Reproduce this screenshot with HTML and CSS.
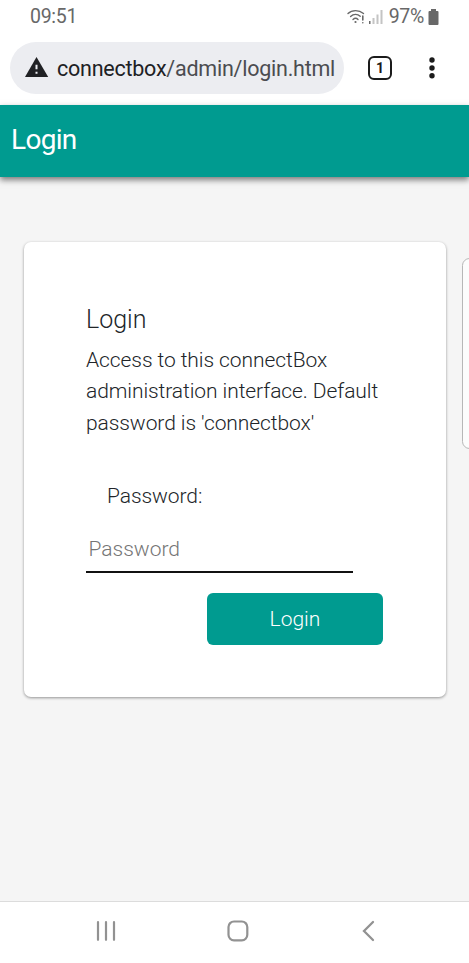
FILE: index.html
```html
<!DOCTYPE html>
<html lang="en">
<head>
<meta charset="utf-8">
<title>Login</title>
<link rel="stylesheet" href="styles.css">
</head>
<body>
<div class="status">
  <span class="time">09:51</span>
  <div class="indicators">
    <svg class="wifi" width="19" height="16" viewBox="0 0 19 16" fill="none" stroke="#686868" stroke-width="1.4" stroke-linecap="round">
      <path d="M1 4.500C5 .6 12 .6 16.500 4.500M3.600 7.500C6.500 4.700 10.500 4.700 13.200 7.200M6 10.400C7.600 8.900 9.500 8.900 11 10.400"/>
      <circle cx="8.500" cy="13" r="1.100" fill="#686868" stroke="none"/>
      <path d="M15.800 7V11M15.800 13.700V13.800" stroke-width="1.600"/>
    </svg>
    <svg class="signal" width="15" height="16" viewBox="0 0 15 16">
      <path fill="#686868" d="M1 12h1.500v3H1z"/>
      <path fill="#c4c4c4" d="M4.500 9h2v6h-2zM8.500 5.500h2V15h-2zM12.500 1h2v14h-2z"/>
    </svg>
    <span class="percent">97%</span>
    <svg class="battery" width="11" height="16" viewBox="0 0 11 16"><path fill="#686868" d="M3 0h5v2h1.500q1 0 1 1V15q0 1-1 1h-8q-1 0-1-1V3q0-1 1-1H3z"/></svg>
  </div>
</div>
<div class="browser">
  <div class="address">
    <svg class="warning" width="24" height="20" viewBox="0 0 24 20"><path fill="#202124" d="M11.500 0L23.200 20H0z"/><path fill="#ecedf1" d="M10.500 7.800h2v4.500h-2zM10.500 14.700h2v2h-2z"/></svg>
    <span class="url">connectbox<span class="path">/admin/login.html</span></span>
  </div>
  <div class="tabs">1</div>
  <svg class="more" width="6" height="22" viewBox="0 0 6 22" fill="#1b1b1b"><circle cx="3" cy="3" r="2.700"/><circle cx="3" cy="11" r="2.700"/><circle cx="3" cy="18.800" r="2.700"/></svg>
</div>
<header class="header"><h1>Login</h1></header>
<main class="content">
  <form class="card">
    <h2>Login</h2>
    <p>Access to this connectBox<br>administration interface. Default<br>password is 'connectbox'</p>
    <label for="password">Password:</label>
    <input id="password" type="password" placeholder="Password">
    <button type="button">Login</button>
  </form>
  <div class="edge-panel"></div>
</main>
<nav class="nav">
  <svg width="20" height="20" viewBox="0 0 20 20" stroke="#929292" stroke-width="2.200" stroke-linecap="round"><path d="M2 1.200v17.600M10 1.200v17.600M18 1.200v17.600"/></svg>
  <svg class="home" width="22" height="22" viewBox="0 0 22 22" fill="none" stroke="#929292" stroke-width="2.200"><rect x="1.500" y="1.500" width="18.800" height="18.800" rx="5.500"/></svg>
  <svg width="14" height="22" viewBox="0 0 14 22" fill="none" stroke="#929292" stroke-width="2.300" stroke-linecap="round"><path d="M12 2L3 11l9 9"/></svg>
</nav>
</body>
</html>
```
FILE: styles.css
```css
* { box-sizing: border-box; }
body {
  margin: 0;
  height: 963px;
  display: flex;
  flex-direction: column;
  overflow: hidden;
  background: #fff;
  color: #212529;
  font-family: Roboto, sans-serif;
}
svg { display: block; flex: none; }
.status {
  height: 33px;
  padding: 0 30px;
  display: flex;
  justify-content: space-between;
  align-items: center;
  color: #686868;
  font-size: 19.5px;
  letter-spacing: -.3px;
  line-height: 33px;
}
.indicators { display: flex; align-items: center; }
.signal { margin: 0 6px 0 2px; }
.battery { margin-left: 4px; }
.browser {
  height: 72px;
  padding: 9px 34px 11px 10px;
  display: flex;
  align-items: center;
}
.address {
  width: 334px;
  height: 52px;
  padding-left: 15px;
  display: flex;
  align-items: center;
  border-radius: 26px;
  background: #ecedf1;
}
.warning { margin-top: -3px; }
.url {
  margin-left: 8px;
  color: #202124;
  font-size: 21.5px;
  letter-spacing: -.24px;
  white-space: nowrap;
}
.path { color: #4b4c50; }
.tabs {
  width: 24px;
  height: 24px;
  margin-left: 24px;
  border: 2px solid #1b1b1b;
  border-radius: 6px;
  color: #1b1b1b;
  font-size: 14px;
  font-weight: 700;
  line-height: 20px;
  text-align: center;
}
.more { margin-left: auto; }
.header {
  position: relative;
  z-index: 1;
  height: 72px;
  padding-left: 11px;
  background: #009b90;
  color: #fff;
  box-shadow: 0 3px 6px rgba(0, 0, 0, .5);
}
h1 {
  margin: 0;
  font-size: 28px;
  font-weight: 400;
  letter-spacing: -.7px;
  line-height: 70px;
}
.content {
  position: relative;
  flex: 1;
  padding: 65px 23.5px 0 23.5px;
  background: #f5f5f5;
}
.card {
  height: 455px;
  padding: 62px 62.5px 0 62.5px;
  display: flex;
  flex-direction: column;
  align-items: flex-start;
  border-radius: 7px;
  background: #fff;
  box-shadow: 0 1px 3px rgba(0, 0, 0, .4);
}
h2 {
  margin: 0;
  font-size: 25px;
  font-weight: 300;
  line-height: 31px;
}
p {
  margin: 10px 0 0;
  font-size: 21px;
  font-weight: 300;
  letter-spacing: -.08px;
  line-height: 31.3px;
  white-space: nowrap;
}
label {
  margin: 42px 0 0 21px;
  font-size: 21px;
  font-weight: 300;
  letter-spacing: -.08px;
  line-height: 31px;
}
input {
  width: 267px;
  height: 47px;
  margin: 14px 0 0;
  padding: 1px 0 0 2.5px;
  border: 0;
  border-bottom: 2px solid #111;
  border-radius: 0;
  background: transparent;
  font: 300 21px Roboto, sans-serif;
}
input::placeholder { color: #757575; opacity: 1; }
button {
  align-self: flex-end;
  width: 176px;
  height: 52px;
  margin: 20.5px 0 0;
  padding: 0;
  border: 0;
  border-radius: 6px;
  background: #009b90;
  color: #fff;
  font: 300 21px Roboto, sans-serif;
}
.edge-panel {
  position: absolute;
  top: 81px;
  right: -8px;
  width: 15px;
  height: 191px;
  border: 1px solid #b7b7b7;
  border-radius: 8px;
  background: #fcfcfc;
}
.nav {
  height: 62px;
  padding: 0 94px 3px 96px;
  display: flex;
  align-items: center;
  justify-content: space-between;
  border-top: 1px solid #dcdcdc;
  background: #fff;
}
.home { margin-right: 2px; }
```
